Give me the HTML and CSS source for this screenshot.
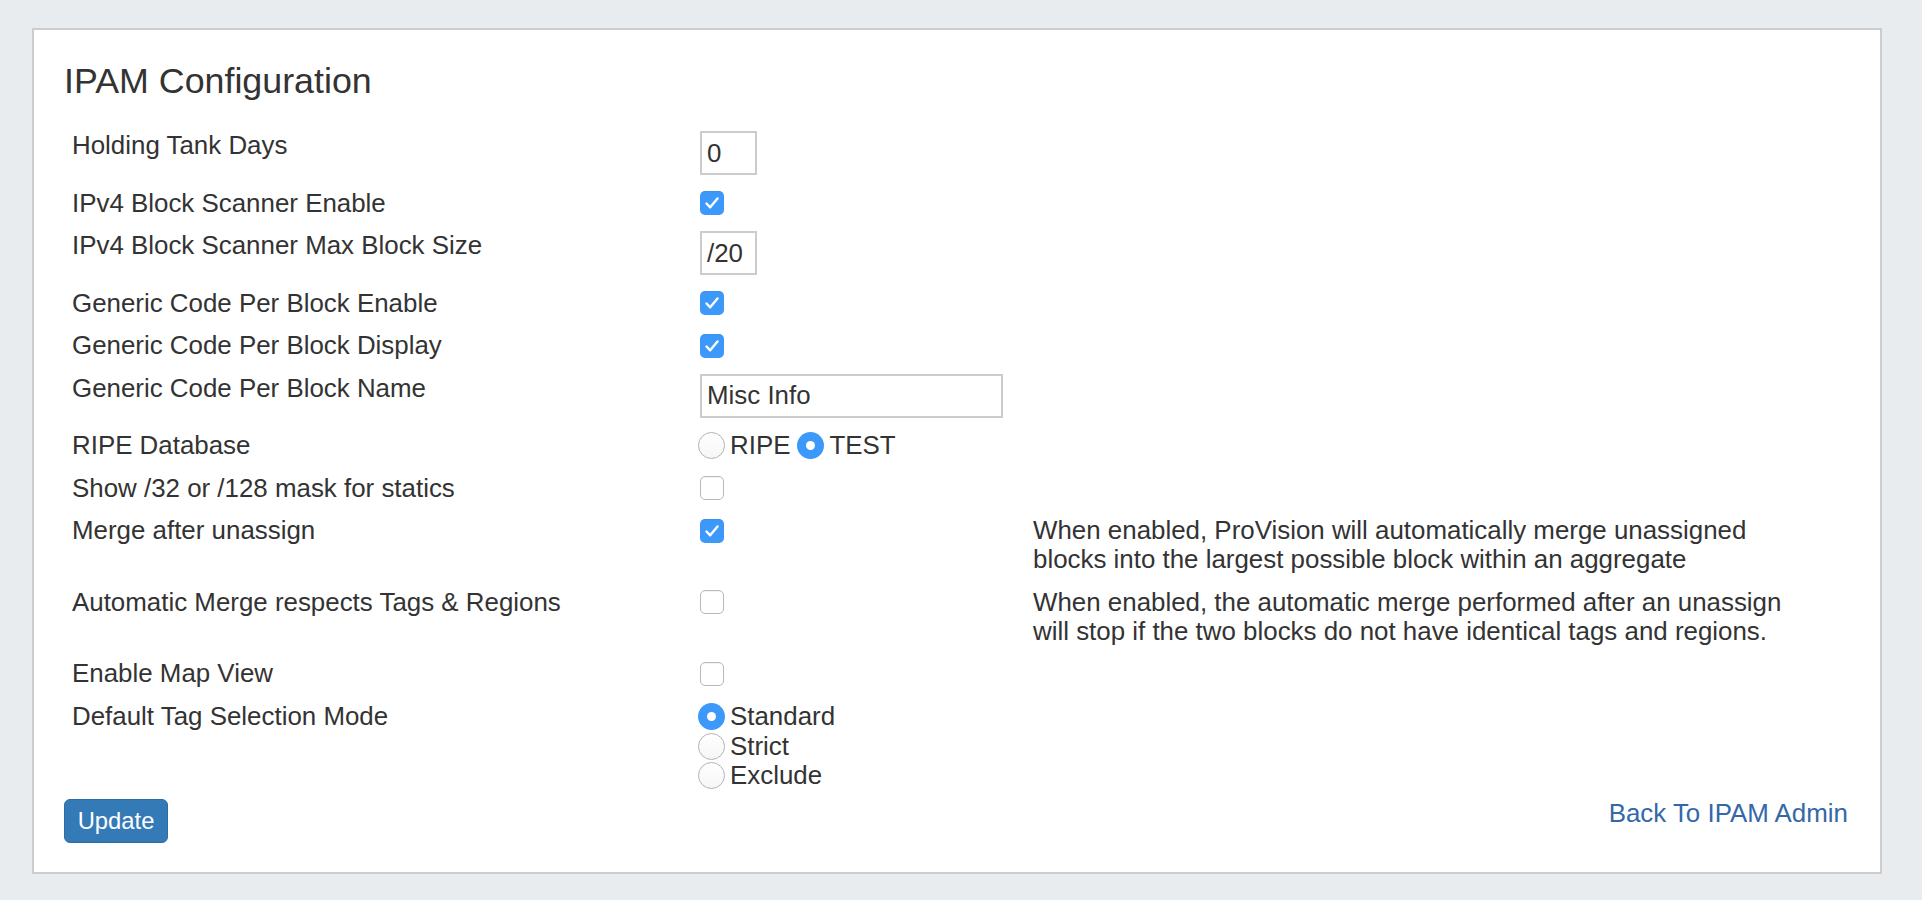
FILE: index.html
```html
<!DOCTYPE html>
<html lang="en">
<head>
<meta charset="utf-8">
<title>IPAM Configuration</title>
<link rel="stylesheet" href="styles.css">
</head>
<body>
<div class="panel">
  <h1 class="title">IPAM Configuration</h1>
  <div class="form">
    <div class="row">
      <div class="label">Holding Tank Days</div>
      <div class="ctrl"><input class="text short" type="text" value="0"></div>
      <div class="desc"></div>
    </div>
    <div class="row">
      <div class="label">IPv4 Block Scanner Enable</div>
      <div class="ctrl line"><span class="check on"><svg viewBox="0 0 24 24" width="24" height="24"><path d="M6.5 12.5 L10.2 16.3 L17.5 7.5" fill="none" stroke="#fff" stroke-width="2.4" stroke-linecap="round" stroke-linejoin="round"/></svg></span></div>
      <div class="desc"></div>
    </div>
    <div class="row">
      <div class="label">IPv4 Block Scanner Max Block Size</div>
      <div class="ctrl"><input class="text short" type="text" value="/20"></div>
      <div class="desc"></div>
    </div>
    <div class="row">
      <div class="label">Generic Code Per Block Enable</div>
      <div class="ctrl line"><span class="check on"><svg viewBox="0 0 24 24" width="24" height="24"><path d="M6.5 12.5 L10.2 16.3 L17.5 7.5" fill="none" stroke="#fff" stroke-width="2.4" stroke-linecap="round" stroke-linejoin="round"/></svg></span></div>
      <div class="desc"></div>
    </div>
    <div class="row">
      <div class="label">Generic Code Per Block Display</div>
      <div class="ctrl line"><span class="check on"><svg viewBox="0 0 24 24" width="24" height="24"><path d="M6.5 12.5 L10.2 16.3 L17.5 7.5" fill="none" stroke="#fff" stroke-width="2.4" stroke-linecap="round" stroke-linejoin="round"/></svg></span></div>
      <div class="desc"></div>
    </div>
    <div class="row">
      <div class="label">Generic Code Per Block Name</div>
      <div class="ctrl"><input class="text long" type="text" value="Misc Info"></div>
      <div class="desc"></div>
    </div>
    <div class="row">
      <div class="label">RIPE Database</div>
      <div class="ctrl line">
        <span class="radio"></span><span class="opt">RIPE</span>
        <span class="radio on gap"></span><span class="opt">TEST</span>
      </div>
      <div class="desc"></div>
    </div>
    <div class="row">
      <div class="label">Show /32 or /128 mask for statics</div>
      <div class="ctrl line"><span class="check"></span></div>
      <div class="desc"></div>
    </div>
    <div class="row">
      <div class="label">Merge after unassign</div>
      <div class="ctrl line"><span class="check on"><svg viewBox="0 0 24 24" width="24" height="24"><path d="M6.5 12.5 L10.2 16.3 L17.5 7.5" fill="none" stroke="#fff" stroke-width="2.4" stroke-linecap="round" stroke-linejoin="round"/></svg></span></div>
      <div class="desc">When enabled, ProVision will automatically merge unassigned<br>blocks into the largest possible block within an aggregate</div>
    </div>
    <div class="row">
      <div class="label">Automatic Merge respects Tags &amp; Regions</div>
      <div class="ctrl line"><span class="check"></span></div>
      <div class="desc">When enabled, the automatic merge performed after an unassign<br>will stop if the two blocks do not have identical tags and regions.</div>
    </div>
    <div class="row">
      <div class="label">Enable Map View</div>
      <div class="ctrl line"><span class="check"></span></div>
      <div class="desc"></div>
    </div>
    <div class="row">
      <div class="label">Default Tag Selection Mode</div>
      <div class="ctrl">
        <div class="stack"><span class="radio on"></span><span class="opt">Standard</span></div>
        <div class="stack"><span class="radio"></span><span class="opt">Strict</span></div>
        <div class="stack"><span class="radio"></span><span class="opt">Exclude</span></div>
      </div>
      <div class="desc"></div>
    </div>
  </div>
  <div class="footer">
    <button class="btn" type="button">Update</button>
    <a class="back" href="#">Back To IPAM Admin</a>
  </div>
</div>
</body>
</html>
```

FILE: styles.css
```css
html, body {
  margin: 0;
  padding: 0;
}
body {
  background: #e9ecef;
  font-family: "Liberation Sans", Arial, Helvetica, sans-serif;
  color: #333;
  font-size: 25.9px;
  line-height: 29px;
  height: 900px;
  overflow: hidden;
}
.panel {
  margin: 28px 40px 0 32px;
  background: #fff;
  border: 2px solid #cdcdcd;
  padding: 32px 32px 29px 30px;
}
.title {
  margin: 0;
  font-size: 35.8px;
  line-height: 39px;
  font-weight: normal;
  color: #333;
}
.form {
  margin-top: 30px;
  display: flex;
  flex-direction: column;
  gap: 13.5px;
}
.row {
  display: grid;
  grid-template-columns: 636px 333px 1fr;
  align-items: start;
}
.label {
  padding-left: 8px;
}
.ctrl.line {
  display: flex;
  align-items: center;
  height: 29px;
}
.text {
  box-sizing: border-box;
  height: 44px;
  border: 2px solid #cccccc;
  padding: 0 5px;
  margin: 0;
  font-family: "Liberation Sans", Arial, sans-serif;
  font-size: 25.9px;
  color: #333;
  background: #fff;
  outline: none;
  display: block;
}
.text.short { width: 57px; }
.text.long { width: 303px; }
.check {
  box-sizing: border-box;
  display: inline-block;
  width: 24px;
  height: 24px;
  border-radius: 5px;
  border: 1.5px solid #b9b9b9;
  background: #fff;
  box-shadow: inset 0 1px 1px rgba(0,0,0,0.05);
}
.check.on {
  border: none;
  background: #3d99f9;
}
.check svg { display: block; }
.radio {
  box-sizing: border-box;
  display: inline-block;
  width: 27px;
  height: 27px;
  border-radius: 50%;
  border: 1.5px solid #b3b3b3;
  background: linear-gradient(#ffffff, #f6f6f6);
  margin-left: -2px;
  position: relative;
  flex: none;
}
.radio.on {
  border: none;
  background: #3d99f9;
}
.radio.on::after {
  content: "";
  position: absolute;
  left: 50%;
  top: 50%;
  width: 9px;
  height: 9px;
  margin: -4.5px 0 0 -4.5px;
  border-radius: 50%;
  background: #fff;
}
.radio.gap { margin-left: 7px; }
.opt { margin-left: 5px; }
.stack {
  display: flex;
  align-items: center;
  height: 29.7px;
}
.footer {
  margin-top: 8px;
  display: flex;
  justify-content: space-between;
  align-items: flex-start;
}
.btn {
  box-sizing: border-box;
  height: 44px;
  width: 104px;
  padding: 0;
  background: #337ab7;
  border: 1px solid #2e6da4;
  border-radius: 6px;
  color: #fff;
  font-family: "Liberation Sans", Arial, sans-serif;
  font-size: 23.8px;
  line-height: 42px;
}
.back {
  color: #3468a8;
  text-decoration: none;
  line-height: 29px;
}
```
